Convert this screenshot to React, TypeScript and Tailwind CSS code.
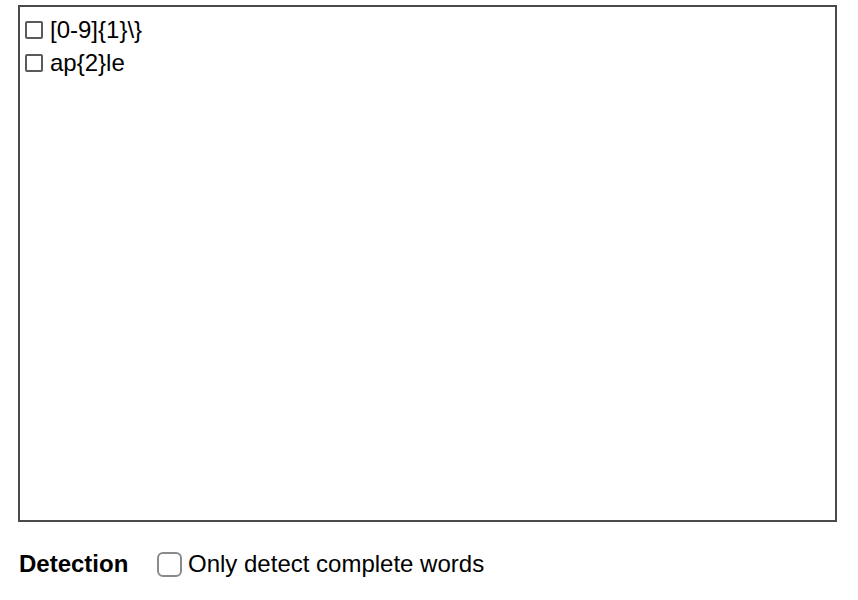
import React from "react";

const patterns = ["[0-9]{1}\\}", "ap{2}le"];

function BoxCheck() {
  return (
    <span className="inline-block w-[18px] h-[18px] border-2 border-[#5a5a5a] rounded-[2px] bg-white shrink-0" />
  );
}

export default function App() {
  return (
    <div
      className="min-h-screen bg-white text-black"
      style={{ fontFamily: '"Liberation Sans", Arial, sans-serif' }}
    >
      <div className="pl-[18px] pt-[5px] pr-[21px]">
        <div className="h-[517px] border-2 border-[#4a4a4a] pl-[5px] pt-[9px]">
          <ul className="flex flex-col gap-[5px]">
            {patterns.map((p) => (
              <li key={p} className="flex items-center gap-[7px] text-[24px] leading-[28px]">
                <BoxCheck />
                <span>{p}</span>
              </li>
            ))}
          </ul>
        </div>

        <div className="flex items-center mt-[28px] pl-[1px] leading-[28px]">
          <span className="font-bold text-[24px] w-[138px]">Detection</span>
          <label className="flex items-center gap-[6px] text-[24px]">
            <span className="inline-block w-[25px] h-[25px] border-2 border-[#8a8a8a] rounded-[6px] bg-white" />
            <span>Only detect complete words</span>
          </label>
        </div>
      </div>
    </div>
  );
}
